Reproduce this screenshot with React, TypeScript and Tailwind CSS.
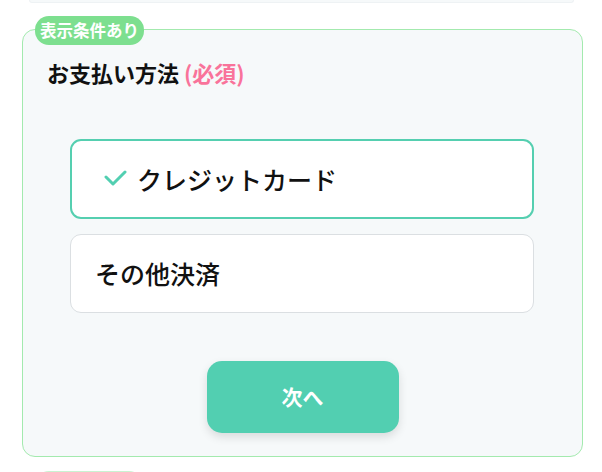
import React from "react";

export default function App() {
  return (
    <div
      className="w-[602px] h-[472px] overflow-hidden bg-white"
      style={{ fontFamily: '"Noto Sans CJK JP", "Noto Sans", sans-serif' }}
    >
      {/* previous section tail */}
      <div className="ml-[29px] w-[545px] h-[3px] rounded-b-[10px] bg-[#f6f9fa] border-x border-b border-[#eef2f4]" />

      {/* card */}
      <div className="relative mt-[26px] ml-[22px] w-[561px] h-[428px] rounded-[13px] border border-[#a3eaae] bg-[#f6f9fa]">
        <div className="absolute left-[12px] top-[-14px] h-[29px] w-[109px] rounded-[14px] bg-[#7ddf8f] flex items-center justify-center text-white text-[16.5px] font-bold leading-none">
          表示条件あり
        </div>

        <div className="pt-[27px] pl-[24px] text-[22px] font-bold leading-[30px] text-[#111]">
          お支払い方法 <span className="text-[#f9739a]">(必須)</span>
        </div>

        <div className="mt-[52px] ml-[47px] w-[464px] flex flex-col gap-[15px]">
          <div className="h-[80px] rounded-[11px] border-2 border-[#55cfb0] bg-white flex items-center pl-[31px]">
            <svg width="24" height="24" viewBox="0 0 24 24" className="shrink-0">
              <polyline
                points="3,10 10,17 22,5"
                fill="none"
                stroke="#52cfb1"
                strokeWidth="3"
                strokeLinecap="round"
                strokeLinejoin="round"
              />
            </svg>
            <span className="ml-[10px] text-[25px] font-medium text-[#111] leading-none">
              クレジットカード
            </span>
          </div>
          <div className="h-[79px] rounded-[11px] border border-[#dbdfe2] bg-white flex items-center pl-[24px]">
            <span className="text-[25px] font-medium text-[#111] leading-none">
              その他決済
            </span>
          </div>
        </div>

        <div className="mt-[48px] flex justify-center">
          <button className="w-[192px] h-[72px] rounded-[15px] bg-[#52cfb1] text-white text-[21px] font-bold shadow-[0_4px_10px_rgba(0,0,0,0.12)]">
            次へ
          </button>
        </div>
      </div>

      {/* next section badge */}
      <div className="mt-[14px] ml-[35px] w-[108px] h-[29px] rounded-[14px] bg-[#c9f3d1]" />
    </div>
  );
}
